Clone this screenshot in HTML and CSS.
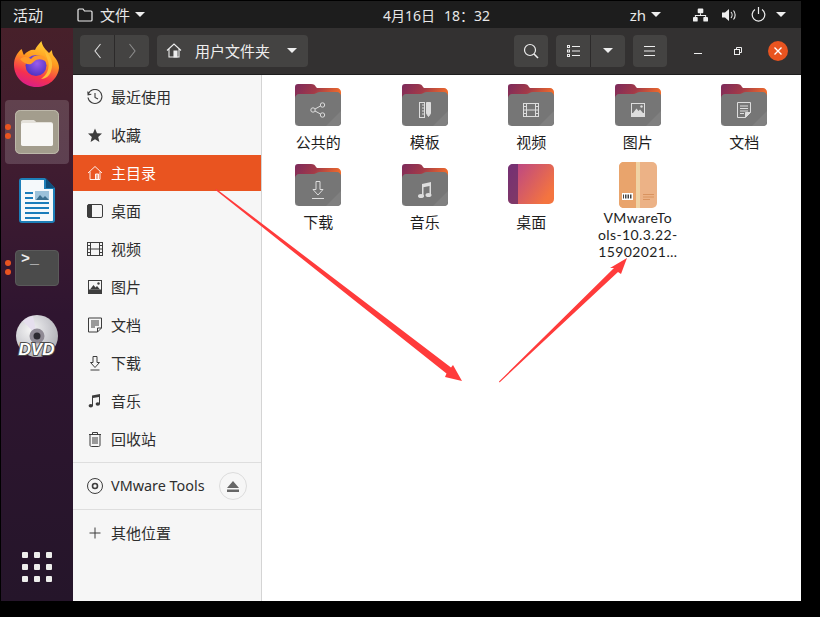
FILE: index.html
```html
<!DOCTYPE html>
<html lang="zh">
<head>
    <meta charset="utf-8">
    <title>用户文件夹</title>
    <link rel="stylesheet" href="styles.css">
</head>
<body>
<svg class="defs" width="0" height="0">
    <defs>
        <linearGradient id="folderBack" x1="0" y1="0" x2="1" y2="0.3">
            <stop offset="0" stop-color="#7c2a5c"/>
            <stop offset="0.5" stop-color="#a33a48"/>
            <stop offset="1" stop-color="#ef6b2c"/>
        </linearGradient>
        <linearGradient id="desktopGrad" x1="0" y1="0" x2="1" y2="0.6">
            <stop offset="0" stop-color="#b3408f"/>
            <stop offset="1" stop-color="#f4743f"/>
        </linearGradient>
        <linearGradient id="foxOuter" x1="0.7" y1="0" x2="0.35" y2="1">
            <stop offset="0" stop-color="#ffd53a"/>
            <stop offset="0.4" stop-color="#ff9a1f"/>
            <stop offset="0.75" stop-color="#f5314f"/>
            <stop offset="1" stop-color="#d91d8b"/>
        </linearGradient>
        <radialGradient id="foxGlobe" cx="0.55" cy="0.4" r="0.65">
            <stop offset="0" stop-color="#9a5cec"/>
            <stop offset="1" stop-color="#4a2fc0"/>
        </radialGradient>
        <radialGradient id="discGrad" cx="0.35" cy="0.35" r="0.8">
            <stop offset="0" stop-color="#f5f5f5"/>
            <stop offset="0.5" stop-color="#cfcfd4"/>
            <stop offset="1" stop-color="#a9a9ae"/>
        </radialGradient>
        <symbol id="folder" viewBox="0 0 46 42">
            <path d="M3 0h13c3 0 4 1 5 3l1 1h20c2 0 4 2 4 4v12H0V3c0-2 1-3 3-3z" fill="url(#folderBack)"/>
            <path d="M4 42c-2 0-4-2-4-4V14c0-2 2-4 4-4h14c3 0 4-2 7-2h17c2 0 4 2 4 4v26c0 2-2 4-4 4z" fill="#767676"/>
            <path d="M46 27v11c0 2-2 4-4 4H31z" fill="#808080"/>
            <path d="M0 38c0 2 2 4 4 4h38c2 0 4-2 4-4v1c0 2-2 3-4 3H4c-2 0-4-1-4-3z" fill="#555"/>
        </symbol>
    </defs>
</svg>

<div class="screen">
    <div class="topbar">
        <span class="activities">活动</span>
        <svg class="app-icon" width="16" height="14" viewBox="0 0 16 14" fill="none" stroke="#eee" stroke-width="1.2"><path d="M1 12V2c0-.6.4-1 1-1h4l1.500 2H14c.6 0 1 .4 1 1v8c0 .6-.4 1-1 1H2c-.6 0-1-.4-1-1z"/></svg>
        <span class="app-name">文件</span>
        <span class="caret small"></span>
        <span class="clock"><span>4月16日</span><span>18：32</span></span>
        <span class="lang">zh</span>
        <span class="caret small"></span>
        <div class="tray">
            <svg width="15" height="14" viewBox="0 0 16 14" fill="#eee"><rect x="5" y="0" width="6" height="5" rx="1"/><rect x="0" y="9" width="5" height="5" rx="1"/><rect x="11" y="9" width="5" height="5" rx="1"/><path d="M7.500 5h1v2H14v2h-1V8H3v1H2V7h5.500z"/></svg>
            <svg width="15" height="14" viewBox="0 0 15 14" fill="#eee"><path d="M0 4.500h3L7 1v12L3 9.500H0z"/><path d="M9 4c1.400 1.600 1.400 4.400 0 6M11.500 2.500c2.200 2.500 2.200 6.500 0 9" fill="none" stroke="#eee" stroke-width="1.100"/></svg>
            <svg width="15" height="15" viewBox="0 0 15 15" fill="none" stroke="#eee" stroke-width="1.200"><path d="M4 2.500a6.300 6.300 0 1 0 7 0M7.500 0v7"/></svg>
            <span class="caret small tray-caret"></span>
        </div>
    </div>

    <div class="desk">
        <nav class="dock">
            <div class="dock-item">
                <svg width="46" height="46" viewBox="0 0 46 46">
                    <path d="M7.500 8C9 11 9 13 10 14C13 10 18 8 21 9C22 6 25 3 27.500 0C28 5 32 9 35 12C36 11 37 10 38 9C38 14 40 15 42 18C44 21 45 24 45 27C44 38 34 46 22.500 46C10 46 0 36 0 24C0 17 3 12 7.500 8Z" fill="url(#foxOuter)"/>
                    <circle cx="22" cy="24.500" r="10.500" fill="url(#foxGlobe)"/>
                    <path d="M6 18C10 15 14 16 17 18C19 15 24 13 29 15C32 17 34 20 34 24C32 19 27 17 22 19C20 20 19 22 17 23C14 24 9 22 6 18Z" fill="#ff9a2a"/>
                    <path d="M31 10C37 15 40 22 37 30C36 35 31 38 27 38C33 34 36 27 34 20C33 16 31 13 31 10Z" fill="#ffbd38"/>
                </svg>
            </div>
            <div class="dock-item active">
                <span class="pips"><i></i><i></i></span>
                <svg width="44" height="44" viewBox="0 0 44 44">
                    <rect width="44" height="44" rx="5" fill="#a39d8d"/>
                    <rect x="0.500" y="0.500" width="43" height="43" rx="5" fill="none" stroke="#bdb8aa"/>
                    <path d="M6 12c0-1 1-2 2-2h10c1 0 2 .5 3 2h15c1 0 2 1 2 2v20c0 1-1 2-2 2H8c-1 0-2-1-2-2z" fill="#e4e1da"/>
                    <path d="M6 15c0-1 1-2 2-2h28c1 0 2 1 2 2v19c0 1-1 2-2 2H8c-1 0-2-1-2-2z" fill="#f8f7f5"/>
                </svg>
            </div>
            <div class="dock-item">
                <svg width="36" height="45" viewBox="0 0 36 45">
                    <path d="M3 0h23l10 10v32c0 2-1 3-3 3H3c-2 0-3-1-3-3V3c0-2 1-3 3-3z" fill="#1d7fb8"/>
                    <path d="M2 2h23v9h9v31c0 .6-.4 1-1 1H3c-.6 0-1-.4-1-1z" fill="#f5f9fb"/>
                    <path d="M27 0l9 10h-9z" fill="#0f4f7c"/>
                    <path d="M6 14h8v2H6zM6 19h8v2H6zM6 24h24v2H6zM6 29h24v2H6zM6 34h24v2H6zM6 39h15v2H6z" fill="#1a7dbb"/>
                    <path d="M16 13h14v9H16z" fill="#9bc2da"/>
                    <path d="M17 22l4-5 3 3 2-2 4 4z" fill="#3a6f8e"/>
                </svg>
            </div>
            <div class="dock-item">
                <span class="pips"><i></i><i></i></span>
                <div class="terminal">&gt;_</div>
            </div>
            <div class="dock-item">
                <svg width="44" height="44" viewBox="0 0 44 44">
                    <circle cx="22" cy="22" r="21" fill="url(#discGrad)"/>
                    <path d="M22 22L8 7a21 21 0 0 1 10-5z" fill="#e6dfee"/>
                    <circle cx="22" cy="22" r="7.500" fill="#8f8a94"/>
                    <circle cx="22" cy="22" r="3.500" fill="#2c2a30"/>
                    <text class="dvd" x="21.500" y="41" text-anchor="middle">DVD</text>
                </svg>
            </div>
            <div class="apps">
                <i></i><i></i><i></i><i></i><i></i><i></i><i></i><i></i><i></i>
            </div>
        </nav>

        <div class="window">
            <header class="toolbar">
                <div class="btn-group nav-group">
                    <button class="tb-btn"><svg width="9" height="16" viewBox="0 0 9 16" fill="none" stroke="#ddd" stroke-width="1.100"><path d="M7.500 1L2 8l5.500 7"/></svg></button>
                    <button class="tb-btn"><svg width="9" height="16" viewBox="0 0 9 16" fill="none" stroke="#8c8c8c" stroke-width="1.100"><path d="M1.500 1L7 8l-5.500 7"/></svg></button>
                </div>
                <div class="pathbar">
                    <svg width="16" height="15" viewBox="0 0 16 15" fill="none" stroke="#eee" stroke-width="1.100"><path d="M1 7.500L8 1l7 6.500M3 6v8h10V6"/><path d="M8 8h3v6H8z" fill="#eee"/></svg>
                    <span class="path-label">用户文件夹</span>
                    <span class="caret"></span>
                </div>
                <div class="toolbar-right">
                    <button class="tb-btn solo"><svg width="16" height="16" viewBox="0 0 16 16" fill="none" stroke="#eee" stroke-width="1.200"><circle cx="7" cy="7" r="5.500"/><path d="M11 11l4 4" stroke-width="1.600"/></svg></button>
                    <div class="btn-group">
                        <button class="tb-btn"><svg width="13" height="12" viewBox="0 0 13 12" fill="#eee"><path d="M0 0h3v3H0zM1 1v1h1V1zM0 4.500h3v3H0zM1 5.500v1h1v-1zM0 9h3v3H0zM1 10v1h1v-1z" fill-rule="evenodd"/><path d="M5 1h8v1H5zM5 5.500h8v1H5zM5 10h8v1H5z"/></svg></button>
                        <button class="tb-btn"><span class="caret"></span></button>
                    </div>
                    <button class="tb-btn solo"><svg width="12" height="10" viewBox="0 0 12 10" fill="#eee"><path d="M0 0h11v1H0zM0 4.500h11v1H0zM0 9h11v1H0z"/></svg></button>
                    <div class="win-controls">
                        <span class="win-min"></span>
                        <svg width="8" height="8" viewBox="0 0 8 8" fill="none" stroke="#eee"><rect x="0.500" y="2.500" width="5" height="5"/><path d="M2.500 2V.5h5v5H6"/></svg>
                        <span class="win-close"><svg width="8" height="8" viewBox="0 0 8 8" stroke="#fff" stroke-width="1.400"><path d="M.5.5l7 7M7.500.5l-7 7"/></svg></span>
                    </div>
                </div>
            </header>

            <div class="panes">
                <aside class="sidebar">
                    <div class="side-row">
                        <svg viewBox="0 0 16 16" fill="none" stroke="#3d3d3d" stroke-width="1.100"><path d="M1.200 5.500A7 7 0 1 1 1 8.500M.8 2.500l.3 3.300 3.200-.5"/><path d="M8 4v4.500l3 1.500"/></svg>
                        <span>最近使用</span>
                    </div>
                    <div class="side-row">
                        <svg viewBox="0 0 16 16" fill="#3d3d3d"><path d="M8 1.500l2 4.700 5 .4-3.800 3.300 1.200 5L8 12.200l-4.400 2.700 1.200-5L1 6.600l5-.4z"/></svg>
                        <span>收藏</span>
                    </div>
                    <div class="side-row selected">
                        <svg viewBox="0 0 16 16" fill="none" stroke="#fff" stroke-width="0.900"><path d="M1 8l7-6.500L15 8M3 6.500V14.500h10V6.500"/><path d="M8.500 9h3v5.500h-3z" fill="#fff" fill-opacity=".5"/></svg>
                        <span>主目录</span>
                    </div>
                    <div class="side-row">
                        <svg viewBox="0 0 16 16" fill="none" stroke="#3d3d3d"><rect x="0.500" y="1.500" width="15" height="13" rx="1.500"/><path d="M1 2h3.500v12H1z" fill="#3d3d3d"/></svg>
                        <span>桌面</span>
                    </div>
                    <div class="side-row">
                        <svg viewBox="0 0 16 16" fill="none" stroke="#3d3d3d"><rect x="0.500" y="1.500" width="15" height="13"/><path d="M3.500 1.500v13M12.500 1.500v13M3.500 8h9M.5 4.500h3M.5 8h3M.5 11.500h3M12.500 4.500h3M12.500 8h3M12.500 11.500h3"/></svg>
                        <span>视频</span>
                    </div>
                    <div class="side-row">
                        <svg viewBox="0 0 16 16" fill="#3d3d3d"><path d="M1 1h14v14H1zM2 2v8.500h12V2zM2 11.500V14h12v-2.500z" fill-rule="evenodd"/><path d="M3 10.500l3.500-4.500 2 2.500 1.500-1.500 3 3.500z"/><circle cx="11.500" cy="4.500" r="1.200"/><rect x="1.500" y="11" width="13" height="3.500"/></svg>
                        <span>图片</span>
                    </div>
                    <div class="side-row">
                        <svg viewBox="0 0 16 16" fill="none" stroke="#3d3d3d"><path d="M1.500 1h13v10l-4 4h-9z"/><path d="M10.500 15v-4h4" /><path d="M4 4h8M4 6h8M4 8h8M4 10h4"/></svg>
                        <span>文档</span>
                    </div>
                    <div class="side-row">
                        <svg viewBox="0 0 16 16" fill="none" stroke="#3d3d3d"><path d="M6 1.500h4v6h2.500L8 12.500 3.500 7.500H6zM3.500 15h9"/></svg>
                        <span>下载</span>
                    </div>
                    <div class="side-row">
                        <svg viewBox="0 0 16 16" fill="#3d3d3d"><path d="M5 2.500l8-1.500v10h-1V4L6 5v8H5z"/><ellipse cx="3.800" cy="12.800" rx="2.200" ry="1.800"/><ellipse cx="10.800" cy="11" rx="2.200" ry="1.800"/></svg>
                        <span>音乐</span>
                    </div>
                    <div class="side-row">
                        <svg viewBox="0 0 16 16" fill="none" stroke="#3d3d3d"><path d="M3 4v10c0 1 .5 1.500 1.500 1.500h7c1 0 1.500-.5 1.500-1.500V4M2 3.500h12M5.500 3V1.500h5V3M6 6v7M8 6v7M10 6v7"/></svg>
                        <span>回收站</span>
                    </div>
                    <div class="side-sep"></div>
                    <div class="side-row mount">
                        <svg viewBox="0 0 16 16" fill="none" stroke="#3d3d3d"><circle cx="8" cy="8" r="7.500"/><circle cx="8" cy="8" r="2.500" stroke-width="1.600"/></svg>
                        <span>VMware Tools</span>
                        <button class="eject"><svg width="12" height="11" viewBox="0 0 12 11" fill="#666"><path d="M6 0l6 7H0zM0 8.500h12V11H0z"/></svg></button>
                    </div>
                    <div class="side-sep"></div>
                    <div class="side-row">
                        <svg viewBox="0 0 16 16" fill="none" stroke="#3d3d3d"><path d="M8 2.500v11M2.500 8h11"/></svg>
                        <span>其他位置</span>
                    </div>
                </aside>

                <main class="files">
                    <div class="file">
                        <div class="thumb"><svg class="folder" width="46" height="42"><use href="#folder"/></svg>
                            <svg class="badge" width="16" height="16" viewBox="0 0 16 16" fill="none" stroke="#ddd"><circle cx="3" cy="8" r="2.200"/><circle cx="12.500" cy="3" r="2.200"/><circle cx="12.500" cy="13" r="2.200"/><path d="M5 7l5.500-3M5 9l5.500 3"/></svg></div>
                        <span>公共的</span>
                    </div>
                    <div class="file">
                        <div class="thumb"><svg class="folder" width="46" height="42"><use href="#folder"/></svg>
                            <svg class="badge" width="12" height="16" viewBox="0 0 12 16" fill="none" stroke="#ddd"><rect x="0.500" y="0.500" width="5" height="15"/><path d="M3 3h2.500M3 6h2.500M3 9h2.500M3 12h2.500"/><path d="M7.500.5h4v11l-2 3-2-3z" fill="#ddd"/></svg></div>
                        <span>模板</span>
                    </div>
                    <div class="file">
                        <div class="thumb"><svg class="folder" width="46" height="42"><use href="#folder"/></svg>
                            <svg class="badge" width="16" height="14" viewBox="0 0 16 14" fill="none" stroke="#ddd"><rect x="0.500" y="0.500" width="15" height="13"/><path d="M3.500.5v13M12.500.5v13M3.500 7h9M.5 3.500h3M.5 7h3M.5 10.500h3M12.500 3.500h3M12.500 7h3M12.500 10.500h3"/></svg></div>
                        <span>视频</span>
                    </div>
                    <div class="file">
                        <div class="thumb"><svg class="folder" width="46" height="42"><use href="#folder"/></svg>
                            <svg class="badge" width="14" height="14" viewBox="0 0 14 14" fill="#ddd"><path d="M0 0h14v14H0zM1 1v9h12V1z" fill-rule="evenodd"/><path d="M2 10l3.500-4.500 2 2.500 1.500-1.500L12 10z"/><circle cx="10.500" cy="3.500" r="1.200"/><rect y="10" width="14" height="4"/></svg></div>
                        <span>图片</span>
                    </div>
                    <div class="file">
                        <div class="thumb"><svg class="folder" width="46" height="42"><use href="#folder"/></svg>
                            <svg class="badge" width="14" height="16" viewBox="0 0 14 16" fill="none" stroke="#ddd"><path d="M.5.500h13v10l-5 5h-8z"/><path d="M8.500 15.500v-5h5" fill="#ddd"/><path d="M3 4h8M3 6.500h8M3 9h8M3 11.500h4"/></svg></div>
                        <span>文档</span>
                    </div>
                    <div class="file">
                        <div class="thumb"><svg class="folder" width="46" height="42"><use href="#folder"/></svg>
                            <svg class="badge" width="12" height="18" viewBox="0 0 12 18" fill="none" stroke="#ddd"><path d="M4 .5h4v8h3L6 14 1 8.500h3zM0 17.500h12"/></svg></div>
                        <span>下载</span>
                    </div>
                    <div class="file">
                        <div class="thumb"><svg class="folder" width="46" height="42"><use href="#folder"/></svg>
                            <svg class="badge" width="14" height="16" viewBox="0 0 14 16" fill="#ddd"><path d="M4 2l9-2v13h-1.500V4L5.500 5.300V15H4z"/><ellipse cx="3" cy="14" rx="3" ry="2"/><ellipse cx="10.500" cy="13" rx="3" ry="2"/></svg></div>
                        <span>音乐</span>
                    </div>
                    <div class="file">
                        <div class="thumb">
                            <svg width="46" height="40" viewBox="0 0 46 40" class="folder">
                                <rect width="46" height="40" rx="5" fill="url(#desktopGrad)"/>
                                <path d="M5 0h5v40H5c-3 0-5-2-5-5V5c0-3 2-5 5-5z" fill="#5a2a6a" fill-opacity=".7"/>
                            </svg>
                        </div>
                        <span>桌面</span>
                    </div>
                    <div class="file">
                        <div class="thumb package">
                            <svg width="38" height="46" viewBox="0 0 38 46">
                                <rect width="38" height="46" rx="5" fill="#ecb286"/>
                                <path d="M5 0h12v46H5c-3 0-5-2-5-5V5c0-3 2-5 5-5z" fill="#e9a46c"/>
                                <rect x="17" width="4" height="46" fill="#f0d3a4"/>
                                <rect x="3" y="31" width="11" height="7" fill="#fff"/>
                                <path d="M4 32.500h1v4H4zM6 32.500h1v4H6zM7.500 32.500h1v4h-1zM9 32.500h1v4H9zM11 32.500h1.500v4H11z" fill="#444"/>
                                <path d="M24 32h11v1H24zM24 34.500h11v1H24zM24 37h7v1h-7z" fill="#d9935f"/>
                            </svg>
                        </div>
                        <span class="long-name">VMwareTo<wbr>ols-10.3.22-<wbr>15902021…</span>
                    </div>
                </main>
            </div>
        </div>
    </div>

    <svg class="arrows" width="800" height="600" viewBox="0 0 800 600">
        <path d="M215.500 188L450 366.500L452 364L461 380L444 376L445.500 372.500L214.500 189Z" fill="#ff3b3b"/>
        <path d="M498 380.500L613 267L609 267L626 257L620 273L617 271L498.500 381.500Z" fill="#ff3b3b"/>
    </svg>
</div>
</body>
</html>
```

FILE: styles.css
```css
* {
    box-sizing: border-box;
}

html, body {
    margin: 0;
    height: 100%;
    background-color: #000;
}

body {
    padding: 1px 0 0 1px;
    font-family: "Noto Sans", "Noto Sans CJK SC", sans-serif;
    font-size: 15px;
    overflow: hidden;
}

button {
    font: inherit;
    border: none;
    padding: 0;
    background: none;
}

.defs {
    position: absolute;
}

.screen {
    position: relative;
    width: 800px;
    height: 600px;
    display: flex;
    flex-direction: column;
    overflow: hidden;
}

/* top bar */
.topbar {
    height: 27px;
    flex: none;
    display: flex;
    align-items: center;
    background-color: #1d1d1d;
    color: #e8e8e8;
    position: relative;
}

.activities {
    margin-left: 12px;
    width: 64px;
}

.app-icon {
    margin-right: 7px;
}

.app-name {
    margin-right: 5px;
}

.clock {
    position: absolute;
    left: 382px;
    display: flex;
    gap: 9px;
    font-size: 14px;
}

.lang {
    margin-left: auto;
    margin-right: 5px;
}

.tray {
    display: flex;
    align-items: center;
    gap: 14px;
    margin-left: 32px;
    margin-right: 15px;
}

.tray-caret {
    margin-left: -4px;
}

.caret {
    display: inline-block;
    width: 0;
    height: 0;
    border-left: 5px solid transparent;
    border-right: 5px solid transparent;
    border-top: 5px solid #eee;
}

/* dock */
.desk {
    flex: 1;
    display: flex;
    min-height: 0;
}

.dock {
    width: 72px;
    flex: none;
    display: flex;
    flex-direction: column;
    align-items: center;
    gap: 4px;
    padding-top: 4px;
    background: linear-gradient(180deg, #47202a 0%, #3f1c30 25%, #2f1530 50%, #25152a 100%);
}

.dock-item {
    position: relative;
    width: 64px;
    height: 64px;
    border-radius: 4px;
    display: flex;
    align-items: center;
    justify-content: center;
}

.dock-item.active {
    background-color: rgba(255, 255, 255, 0.16);
}

.pips {
    position: absolute;
    left: 0;
    top: 24px;
    display: flex;
    flex-direction: column;
    gap: 3px;
}

.pips i {
    display: block;
    width: 6px;
    height: 6px;
    border-radius: 50%;
    background-color: #e95420;
}

.terminal {
    width: 44px;
    height: 36px;
    border-radius: 4px;
    background-color: #4b4b4b;
    border: 1px solid #5a5a5a;
    color: #eee;
    font-family: "Liberation Mono", monospace;
    font-size: 15px;
    font-weight: bold;
    line-height: 17px;
    padding-left: 5px;
}

.dvd {
    font-family: "Liberation Sans", sans-serif;
    font-size: 17px;
    font-weight: bold;
    font-style: italic;
    fill: #fff;
    stroke: #4a4a4a;
    stroke-width: 2px;
    paint-order: stroke;
}

.apps {
    margin-top: auto;
    margin-bottom: 19px;
    display: grid;
    grid-template-columns: repeat(3, 6px);
    gap: 6px;
}

.apps i {
    display: block;
    width: 6px;
    height: 6px;
    border-radius: 1px;
    background-color: #eeeeec;
}

/* window */
.window {
    flex: 1;
    display: flex;
    flex-direction: column;
    min-width: 0;
}

.toolbar {
    height: 47px;
    flex: none;
    display: flex;
    align-items: center;
    padding: 0 0 1px 7px;
    gap: 8px;
    background-color: #333131;
    border-bottom: 1px solid #1e1e1e;
    color: #eee;
}

.btn-group {
    display: flex;
    height: 32px;
    gap: 1px;
    background-color: #2c2a2a;
    border-radius: 4px;
}

.tb-btn {
    width: 34px;
    height: 32px;
    background-color: #444342;
    display: flex;
    align-items: center;
    justify-content: center;
}

.btn-group .tb-btn:first-child {
    border-radius: 4px 0 0 4px;
}

.btn-group .tb-btn:last-child {
    border-radius: 0 4px 4px 0;
}

.tb-btn.solo {
    border-radius: 4px;
}

.pathbar {
    width: 151px;
    height: 32px;
    display: flex;
    align-items: center;
    padding-left: 9px;
    border-radius: 4px;
    background-color: #444342;
}

.path-label {
    margin-left: 13px;
    margin-right: 17px;
    white-space: nowrap;
}

.toolbar-right {
    margin-left: auto;
    display: flex;
    align-items: center;
    gap: 8px;
}

.win-controls {
    display: flex;
    align-items: center;
    width: 126px;
    padding-left: 19px;
}

.win-min {
    width: 8px;
    height: 1px;
    margin-top: 5px;
    background-color: #eee;
    margin-right: 32px;
}

.win-close {
    width: 20px;
    height: 20px;
    margin-left: 26px;
    border-radius: 50%;
    background-color: #e95420;
    display: flex;
    align-items: center;
    justify-content: center;
}

.panes {
    flex: 1;
    display: flex;
    min-height: 0;
}

/* sidebar */
.sidebar {
    width: 189px;
    flex: none;
    padding-top: 4px;
    background-color: #f6f6f6;
    border-right: 1px solid #d4d4d4;
    color: #2e2e2e;
}

.side-row {
    height: 36px;
    margin-bottom: 2px;
    display: flex;
    align-items: center;
    padding-left: 14px;
    gap: 8px;
}

.side-row > span {
    margin-top: -2px;
}

.side-row > svg {
    width: 16px;
    height: 16px;
    flex: none;
}

.side-row.selected {
    background-color: #e95420;
    color: #fff;
}

.side-sep {
    height: 1px;
    margin: 5px 0 3px;
    background-color: #dedede;
}

.side-row.mount {
    height: 40px;
    margin-bottom: 3px;
    position: relative;
    font-size: 14.4px;
}

.mount + .side-sep {
    margin: 3px 0 5px;
}

.eject {
    position: absolute;
    right: 14px;
    top: 6px;
    width: 28px;
    height: 28px;
    border-radius: 50%;
    border: 1px solid #dcdcdc;
    display: flex;
    align-items: center;
    justify-content: center;
}

/* file grid */
.files {
    flex: 1;
    background-color: #fff;
    padding: 9px 0 0 3px;
    display: grid;
    grid-template-columns: repeat(5, 106.5px);
    grid-auto-rows: 80px;
    align-content: start;
    color: #1e1e1e;
}

.file {
    display: flex;
    flex-direction: column;
    align-items: center;
    line-height: 19px;
    text-align: center;
}

.thumb {
    position: relative;
    width: 46px;
    height: 49px;
}

.folder {
    display: block;
}

.badge {
    position: absolute;
    left: 50%;
    top: 26px;
    transform: translate(-50%, -50%);
}

.package {
    margin-top: -2px;
    display: flex;
    justify-content: center;
    height: 50px;
}

.long-name {
    width: 84px;
    margin-top: 1px;
    font-family: Lato, "Noto Sans", sans-serif;
    font-size: 14px;
    letter-spacing: 0.4px;
    line-height: 17px;
}

.arrows {
    position: absolute;
    left: 0;
    top: 0;
    pointer-events: none;
}
```
